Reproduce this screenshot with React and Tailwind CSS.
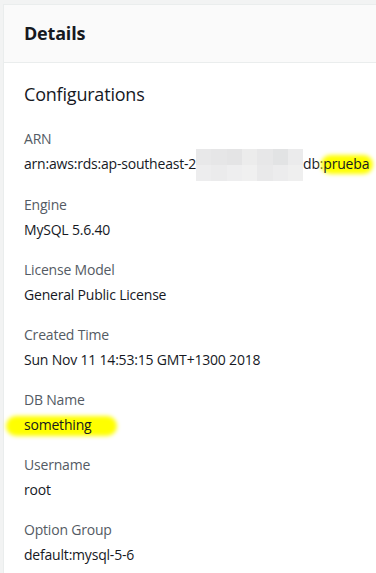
import React from 'react';

const font = { fontFamily: '"Open Sans", "Noto Sans", sans-serif' };

// Yellow marker highlight drawn over a value
const Marker = ({ children, className }) => (
    <span className="relative inline-block">
        <span className={`absolute rounded-full bg-[#ffff00] blur-[2px] ${className}`}></span>
        <span className="relative">{children}</span>
    </span>
);

// Pixelated block hiding part of the ARN
const Mosaic = () => {
    const cells = [
        '#e8e8e9', '#e6e6e7', '#e4e4e5', '#ececec', '#e7e7e8', '#e2e3e4', '#ebebec',
        '#ededee', '#ebebec', '#eeeeef', '#f0f0f0', '#e9e9ea', '#ececed', '#efefef',
    ];
    return (
        <span className="inline-grid grid-cols-7 w-[107px] h-[32px] align-middle -my-[6px]">
            {cells.map((c, i) => (
                <span key={i} className="block" style={{ backgroundColor: c }}></span>
            ))}
        </span>
    );
};

const Field = ({ label, children }) => (
    <div className="mb-[20px]">
        <div className="text-[14px] leading-[20px] text-[#545b64]">{label}</div>
        <div className="mt-[5px] text-[14px] leading-[20px] text-[#16191f] whitespace-nowrap">{children}</div>
    </div>
);

export default function App() {
    return (
        <div className="w-[376px] h-[573px] overflow-hidden bg-[#f2f3f3] pt-[4px] pl-[3px] tracking-[-0.2px]" style={font}>
            <div className="bg-white h-full border-l border-t border-[#eaeded]">
                <div className="bg-[#fafafa] h-[58px] border-b border-[#eaeded] flex items-center px-[20px]">
                    <h2 className="text-[18px] font-bold text-[#16191f]">Details</h2>
                </div>
                <div className="px-[20px] pt-[19px]">
                    <h3 className="text-[18px] leading-[24px] text-[#16191f] mb-[23px]">Configurations</h3>
                    <Field label="ARN">
                        arn:aws:rds:ap-southeast-2<Mosaic />db:<Marker className="-left-[2px] -right-[4px] top-[1px] bottom-[0px]">prueba</Marker>
                    </Field>
                    <Field label="Engine">MySQL 5.6.40</Field>
                    <Field label="License Model">General Public License</Field>
                    <Field label="Created Time">Sun Nov 11 14:53:15 GMT+1300 2018</Field>
                    <Field label="DB Name">
                        <Marker className="-left-[18px] -right-[26px] top-[1px] bottom-[-1px]">something</Marker>
                    </Field>
                    <Field label="Username">root</Field>
                    <Field label="Option Group">default:mysql-5-6</Field>
                </div>
            </div>
        </div>
    );
}
